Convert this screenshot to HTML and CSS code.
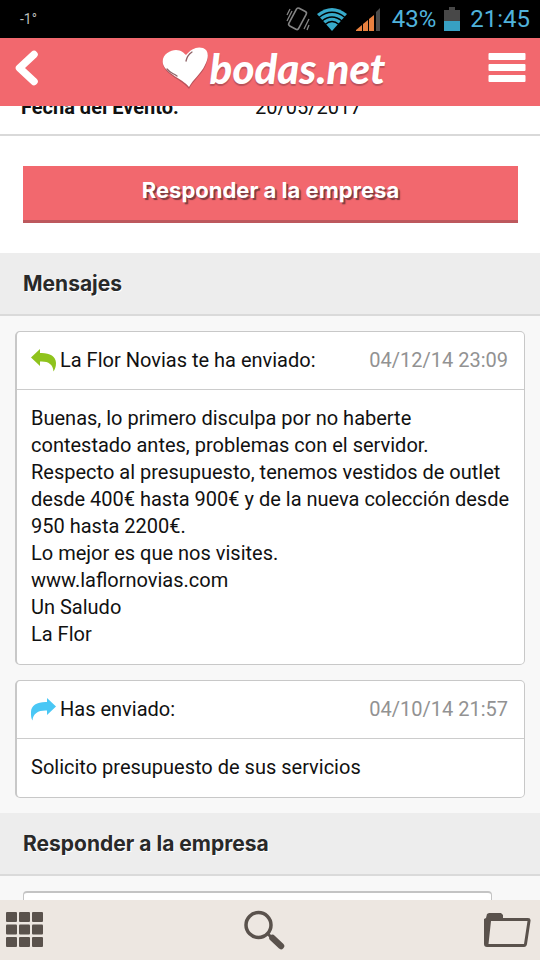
FILE: index.html
```html
<!DOCTYPE html>
<html lang="es">
<head>
<meta charset="utf-8">
<meta name="viewport" content="width=device-width, initial-scale=1">
<title>Mensajes - bodas.net</title>
<link rel="stylesheet" href="styles.css">
</head>
<body>
<div class="status">
  <span class="temperature">-1°</span>
  <div class="status-right">
    <svg width="24" height="26" viewBox="0 0 24 26" fill="none" stroke="#858585">
      <rect x="6" y="3" width="11" height="20" rx="2" stroke-width="1.6" transform="rotate(28 12 13)"/>
      <path d="M1 9l3-6M1 15l5-10M18 23l5-10M21 24l2-5" stroke-width="1.3"/>
    </svg>
    <svg class="wifi" width="32" height="24" viewBox="0 0 32 24">
      <path fill="#37aacb" d="M1 7Q16-5 31 7L16 24z"/>
      <path fill="none" stroke="#000" stroke-width="1.3" d="M3 10.500Q16 0 29 10.500M6 14q10-8 20 0M9 17.500q7-6 14 0"/>
    </svg>
    <svg class="signal" width="24" height="23" viewBox="0 0 24 23">
      <path fill="#e8803f" d="M0 23v-1l6-5v6zM7 23v-7l5-4v11zM13 23V11l5-4v16z"/>
      <path fill="#4b4b4b" d="M20 23V4l4-4v23z"/>
    </svg>
    <span>43%</span>
    <svg class="battery" width="16" height="24" viewBox="0 0 16 24">
      <path fill="#484848" d="M5 0h6v3h5v11H0V3h5z"/><path fill="#37a0c3" d="M0 14h16v10H0z"/>
    </svg>
    <span>21:45</span>
  </div>
</div>

<header class="topbar">
  <button class="icon-button" type="button" aria-label="Volver">
    <svg width="24" height="36" viewBox="0 0 24 36" fill="none" stroke="#fff" stroke-width="7.500" stroke-linecap="round" stroke-linejoin="round"><path d="M19 4.500L4.500 18 19 31.500"/></svg>
  </button>
  <a class="logo" href="#">
    <svg width="46" height="42" viewBox="0 0 46 42">
      <path fill="#b9525a" d="M27 42C20 33 4 28 1 18-1 9 8 3 14 4c5 0 8 3 10 5C29 3 35 0 41 2c6 2 6 10 2 18-4 8-12 14-16 22z"/>
      <path fill="#fff" d="M27 40C20 31 4 27 1 17-1 8 8 3 14 3c5 0 8 3 10 5C29 2 35-1 41 1c6 2 6 10 2 17-4 9-12 14-16 22z"/>
      <path fill="none" stroke="#8f6468" stroke-width="1.300" stroke-linecap="round" d="M5 22c3 4 6 4 10 7M24 14c1-5 3-7 6-9"/>
    </svg>
    <span>bodas.net</span>
  </a>
  <button class="icon-button" type="button" aria-label="Menú">
    <svg width="38" height="30" viewBox="0 0 38 30" fill="#fff"><rect x=".5" y="0" width="37" height="7" rx="1"/><rect x=".5" y="11" width="37" height="7" rx="1"/><rect x=".5" y="22" width="37" height="7" rx="1"/></svg>
  </button>
</header>

<main>
  <dl class="event"><dt>Fecha del Evento:</dt><dd>20/05/2017</dd></dl>
  <div class="action"><button class="reply" type="button">Responder a la empresa</button></div>
  <h2>Mensajes</h2>
  <div class="messages">
    <article class="card">
      <div class="card-head">
        <svg width="25" height="23" viewBox="0 0 25 23"><path fill="#8fc31c" d="M0 8.500L9 0v4c9-.5 16 3 16 10 0 4-1 6-2.500 8.500C22 15 17 12 9 12.500V17z"/></svg>
        <h3>La Flor Novias te ha enviado:</h3>
        <time>04/12/14 23:09</time>
      </div>
      <p>Buenas, lo primero disculpa por no haberte contestado antes, problemas con el servidor.<br>Respecto al presupuesto, tenemos vestidos de outlet desde 400€ hasta 900€ y de la nueva colección desde 950 hasta 2200€.<br>Lo mejor es que nos visites.<br>www.laflornovias.com<br>Un Saludo<br>La Flor</p>
    </article>
    <article class="card">
      <div class="card-head">
        <svg width="25" height="23" viewBox="0 0 25 23"><path fill="#49c7f5" d="M25 8.500L16 0v4C7 3.500 0 7 0 14c0 4 0 6 1.500 8.500C2 15 8 12 16 12.500V17z"/></svg>
        <h3>Has enviado:</h3>
        <time>04/10/14 21:57</time>
      </div>
      <p>Solicito presupuesto de sus servicios</p>
    </article>
  </div>
  <h2>Responder a la empresa</h2>
  <form class="reply-form"><textarea aria-label="Responder a la empresa"></textarea></form>
</main>

<nav class="bottom">
  <a href="#" aria-label="Inicio"><svg width="38" height="36" viewBox="0 0 38 36" fill="#5a524c"><rect width="11" height="10" rx="1"/><rect x="13" width="11" height="10" rx="1"/><rect x="26" width="11" height="10" rx="1"/><rect y="12.500" width="11" height="10" rx="1"/><rect x="13" y="12.500" width="11" height="10" rx="1"/><rect x="26" y="12.500" width="11" height="10" rx="1"/><rect y="25" width="11" height="10" rx="1"/><rect x="13" y="25" width="11" height="10" rx="1"/><rect x="26" y="25" width="11" height="10" rx="1"/></svg></a>
  <a href="#" aria-label="Buscar"><svg width="42" height="40" viewBox="0 0 42 40" fill="none" stroke="#5a524c"><circle cx="15.500" cy="15" r="12.500" stroke-width="3.500"/><path d="M24 23l4 4" stroke-width="3"/><path d="M29.500 28L38 36" stroke-width="6.500" stroke-linecap="round"/></svg></a>
  <a href="#" aria-label="Carpetas"><svg width="47" height="34" viewBox="0 0 47 34"><path fill="#5a524c" fill-rule="evenodd" d="M0 6l2-1 1-4 2-1h12l2 2v3h25q3 0 2.500 3L43 31q-.5 3-3 3H3q-3 0-3-3zM7 8L4.500 31H40l3.500-23z"/></svg></a>
</nav>
</body>
</html>
```
FILE: styles.css
```css
* { box-sizing: border-box; }
body {
  margin: 0;
  height: 100vh;
  display: flex;
  flex-direction: column;
  background: #f8f8f8;
  color: #111;
  font: 20px/27px Roboto, "Liberation Sans", sans-serif;
}
button { border: 0; padding: 0; background: none; color: inherit; font: inherit; cursor: pointer; }
svg { display: block; flex: none; }
h2, h3, p, dl, dd { margin: 0; }

.status {
  flex: none;
  height: 38px;
  padding: 0 10px 0 20px;
  display: flex;
  align-items: center;
  justify-content: space-between;
  background: #000;
}
.temperature { color: #bbb; font-size: 14px; }
.status-right { display: flex; align-items: center; color: #50b3dc; font-size: 24px; }
.wifi { margin-left: 6px; }
.signal { margin: 0 12px 0 8px; }
.battery { margin: 0 10px 0 8px; }

.topbar {
  flex: none;
  position: relative;
  z-index: 1;
  height: 68px;
  padding: 0 14px 8px 15px;
  display: flex;
  align-items: center;
  justify-content: space-between;
  background: #f2686e;
}
.icon-button { display: flex; }
.logo { margin-left: 20px; display: flex; align-items: center; gap: 2px; color: #fff; text-decoration: none; }
.logo span { font: italic 900 42px/44px Lato, sans-serif; text-shadow: 0 2px 1px #b9525a; }

main { flex: 1; min-height: 0; overflow: hidden; }
.event {
  margin-top: -12px;
  height: 42px;
  padding: 0 21px;
  display: grid;
  grid-template-columns: 47% 1fr;
  background: #fff;
  border-bottom: 2px solid #d9d9d9;
}
.event dt { font-weight: 700; }
.action { padding: 30px 22px 30px 23px; background: #fff; }
.reply {
  display: block;
  width: 100%;
  height: 57px;
  padding-bottom: 6px;
  background: #f2686e;
  border-bottom: 3px solid #bd585d;
  color: #fff;
  font: 700 22px/27px Inter, sans-serif;
  text-shadow: 2px 2px 1px #7d3b3f;
}
h2 {
  padding: 17px 23px;
  background: #ededed;
  border-bottom: 2px solid #dadada;
  color: #292929;
  font: 700 21px/27px Inter, sans-serif;
  text-shadow: 1px 1px 0 #fff;
}
.messages { padding: 15px; display: grid; gap: 15px; }
.card { background: #fff; border: 1px solid #c8c8c8; border-left-width: 2px; border-radius: 5px; }
.card-head {
  height: 58px;
  padding: 0 16px 0 14px;
  display: flex;
  align-items: center;
  gap: 4px;
  border-bottom: 1px solid #ccc;
}
.card h3 { font: inherit; }
.card time { margin-left: auto; color: #929292; }
.card p { padding: 15px 12px 16px 14px; }
.reply-form { padding: 15px 48px 0 23px; }
textarea {
  display: block;
  width: 100%;
  height: 120px;
  border: 1px solid #c4c4c4;
  border-top-width: 2px;
  border-radius: 4px;
  background: #fff;
  resize: none;
}

.bottom {
  flex: none;
  height: 60px;
  padding: 0 9px 0 6px;
  display: flex;
  align-items: center;
  justify-content: space-between;
  background: #ede7e1;
}
```
